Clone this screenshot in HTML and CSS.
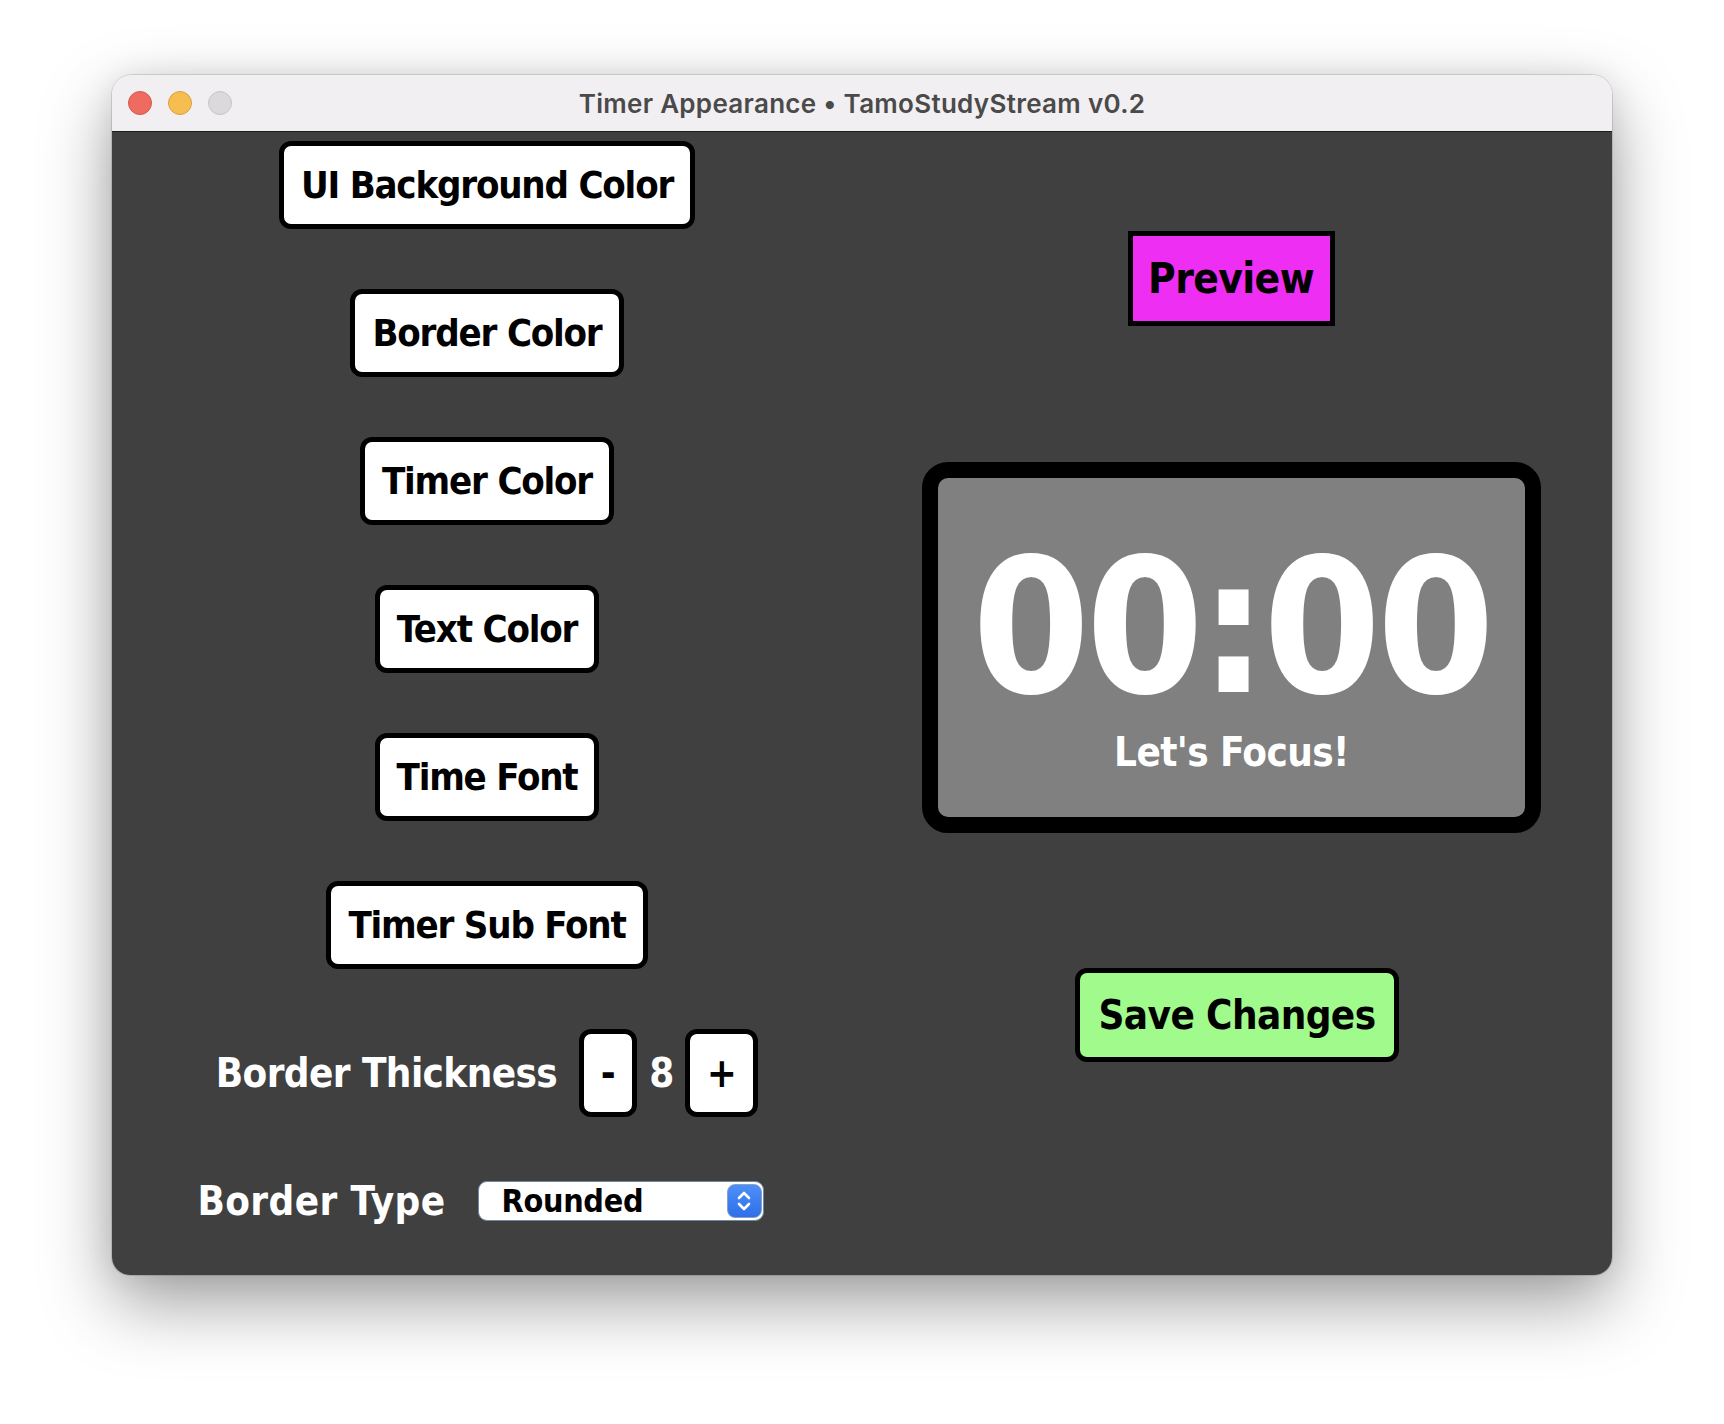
FILE: index.html
```html
<!DOCTYPE html>
<html>
<head>
<meta charset="utf-8">
<title>Timer Appearance</title>
<link rel="stylesheet" href="styles.css">
</head>
<body>
<div class="window">
  <div class="titlebar">
    <div class="lights">
      <span class="light red"></span>
      <span class="light yellow"></span>
      <span class="light gray"></span>
    </div>
    <div class="title">Timer Appearance • TamoStudyStream v0.2</div>
    <div></div>
  </div>
  <div class="content">
    <div class="col left">
      <button class="btn">UI Background Color</button>
      <button class="btn">Border Color</button>
      <button class="btn">Timer Color</button>
      <button class="btn">Text Color</button>
      <button class="btn">Time Font</button>
      <button class="btn">Timer Sub Font</button>
      <div class="row thickness">
        <span class="label">Border Thickness</span>
        <button class="btn small minus">-</button>
        <span class="value">8</span>
        <button class="btn small plus">+</button>
      </div>
      <div class="row type">
        <span class="label">Border Type</span>
        <div class="select">
          <span class="select-text">Rounded</span>
          <span class="stepper">
            <svg width="20" height="26" viewBox="0 0 20 26"><path d="M5 10 L10 5 L15 10" fill="none" stroke="#fff" stroke-width="2.6" stroke-linecap="round" stroke-linejoin="round"/><path d="M5 16 L10 21 L15 16" fill="none" stroke="#fff" stroke-width="2.6" stroke-linecap="round" stroke-linejoin="round"/></svg>
          </span>
        </div>
      </div>
    </div>
    <div class="col right">
      <button class="preview">Preview</button>
      <div class="timer">
        <div class="time">00:00</div>
        <div class="sub">Let's Focus!</div>
      </div>
      <button class="btn save">Save Changes</button>
    </div>
  </div>
</div>
</body>
</html>
```

FILE: styles.css
```css
* { box-sizing: border-box; }
html, body { margin: 0; padding: 0; }
body {
  width: 1724px;
  height: 1424px;
  background: #ffffff;
  overflow: hidden;
  font-family: "DejaVu Sans Condensed", "DejaVu Sans", sans-serif;
}
.window {
  margin: 75px 0 0 112px;
  width: 1500px;
  height: 1200px;
  border-radius: 20px 20px 18px 18px;
  overflow: hidden;
  box-shadow: 0 0 0 1px rgba(0,0,0,0.12), 0 28px 70px rgba(0,0,0,0.38), 0 0 30px rgba(0,0,0,0.08);
}
.titlebar {
  height: 57px;
  background: #f1eff1;
  border-bottom: 1px solid #1e1e1e;
  display: grid;
  grid-template-columns: 1fr auto 1fr;
  align-items: center;
}
.lights {
  display: flex;
  gap: 16px;
  padding-left: 16px;
}
.light {
  width: 24px;
  height: 24px;
  border-radius: 50%;
  display: block;
}
.red { background: #ee6b60; border: 1px solid #d5574d; }
.yellow { background: #f6be50; border: 1px solid #d9a23e; }
.gray { background: #dbd9db; border: 1px solid #c6c4c6; }
.title {
  font-family: Inter, "Noto Sans", sans-serif;
  font-weight: 600;
  font-size: 26px;
  color: #4a4a4a;
  letter-spacing: 0.3px;
}
.content {
  height: 1143px;
  background: #404040;
  display: grid;
  grid-template-columns: 750px 750px;
}
.col {
  display: flex;
  flex-direction: column;
  align-items: center;
}
.left {
  padding-top: 9px;
  gap: 60px;
}
.btn {
  font-family: inherit;
  font-weight: bold;
  font-size: 38px;
  color: #000;
  background: #fff;
  border: 5px solid #000;
  border-radius: 12px;
  height: 88px;
  padding: 0 17px;
  line-height: 1;
  letter-spacing: -1.2px;
  display: flex;
  align-items: center;
  justify-content: center;
}
.row {
  display: flex;
  align-items: center;
}
.label {
  color: #fff;
  font-weight: bold;
  font-size: 40px;
  letter-spacing: -0.6px;
  line-height: 48px;
}
.thickness .label { margin-right: 22px; }
.small { padding: 0; font-size: 40px; letter-spacing: 0; }
.minus { width: 58px; }
.plus { width: 73px; }
.value {
  color: #fff;
  font-weight: bold;
  font-size: 40px;
  margin: 0 11px 0 12px;
}
.type { margin-right: 13px; }
.type .label { margin-right: 32px; letter-spacing: 0.4px; }
.select {
  width: 286px;
  height: 40px;
  background: #fff;
  border: 1.5px solid #7088a8;
  border-radius: 9px;
  display: flex;
  align-items: center;
  justify-content: space-between;
  padding: 0 1px 0 23px;
}
.select-text {
  font-weight: bold;
  font-size: 32px;
  color: #000;
  letter-spacing: -0.3px;
}
.stepper {
  width: 35px;
  height: 34px;
  border-radius: 8px;
  background: linear-gradient(#4d8ff8, #2f6fe8);
  border: 1.5px solid #8aa0c0;
  display: flex;
  align-items: center;
  justify-content: center;
}
.right {
  padding-top: 99px;
}
.preview {
  font-family: inherit;
  font-weight: bold;
  font-size: 42px;
  letter-spacing: -0.6px;
  color: #000;
  background: #ee2ef2;
  border: 5px solid #000;
  border-radius: 0;
  width: 207px;
  height: 95px;
  padding: 0;
  margin-right: 12px;
}
.timer {
  margin-top: 136px;
  margin-right: 11px;
  width: 619px;
  height: 371px;
  border: 16px solid #000;
  border-radius: 26px;
  background: #808080;
  display: flex;
  flex-direction: column;
  align-items: center;
  padding-top: 74px;
  color: #fff;
  font-weight: bold;
}
.time {
  font-size: 188px;
  line-height: 150px;
  letter-spacing: -4px;
}
.sub {
  font-size: 40px;
  line-height: 1;
  margin-top: 30px;
  letter-spacing: -0.6px;
}
.save {
  margin-top: 135px;
  width: 324px;
  height: 94px;
  background: #a0fb8c;
  border-radius: 12px;
  padding: 0;
  font-size: 40px;
  letter-spacing: -0.6px;
}
```
